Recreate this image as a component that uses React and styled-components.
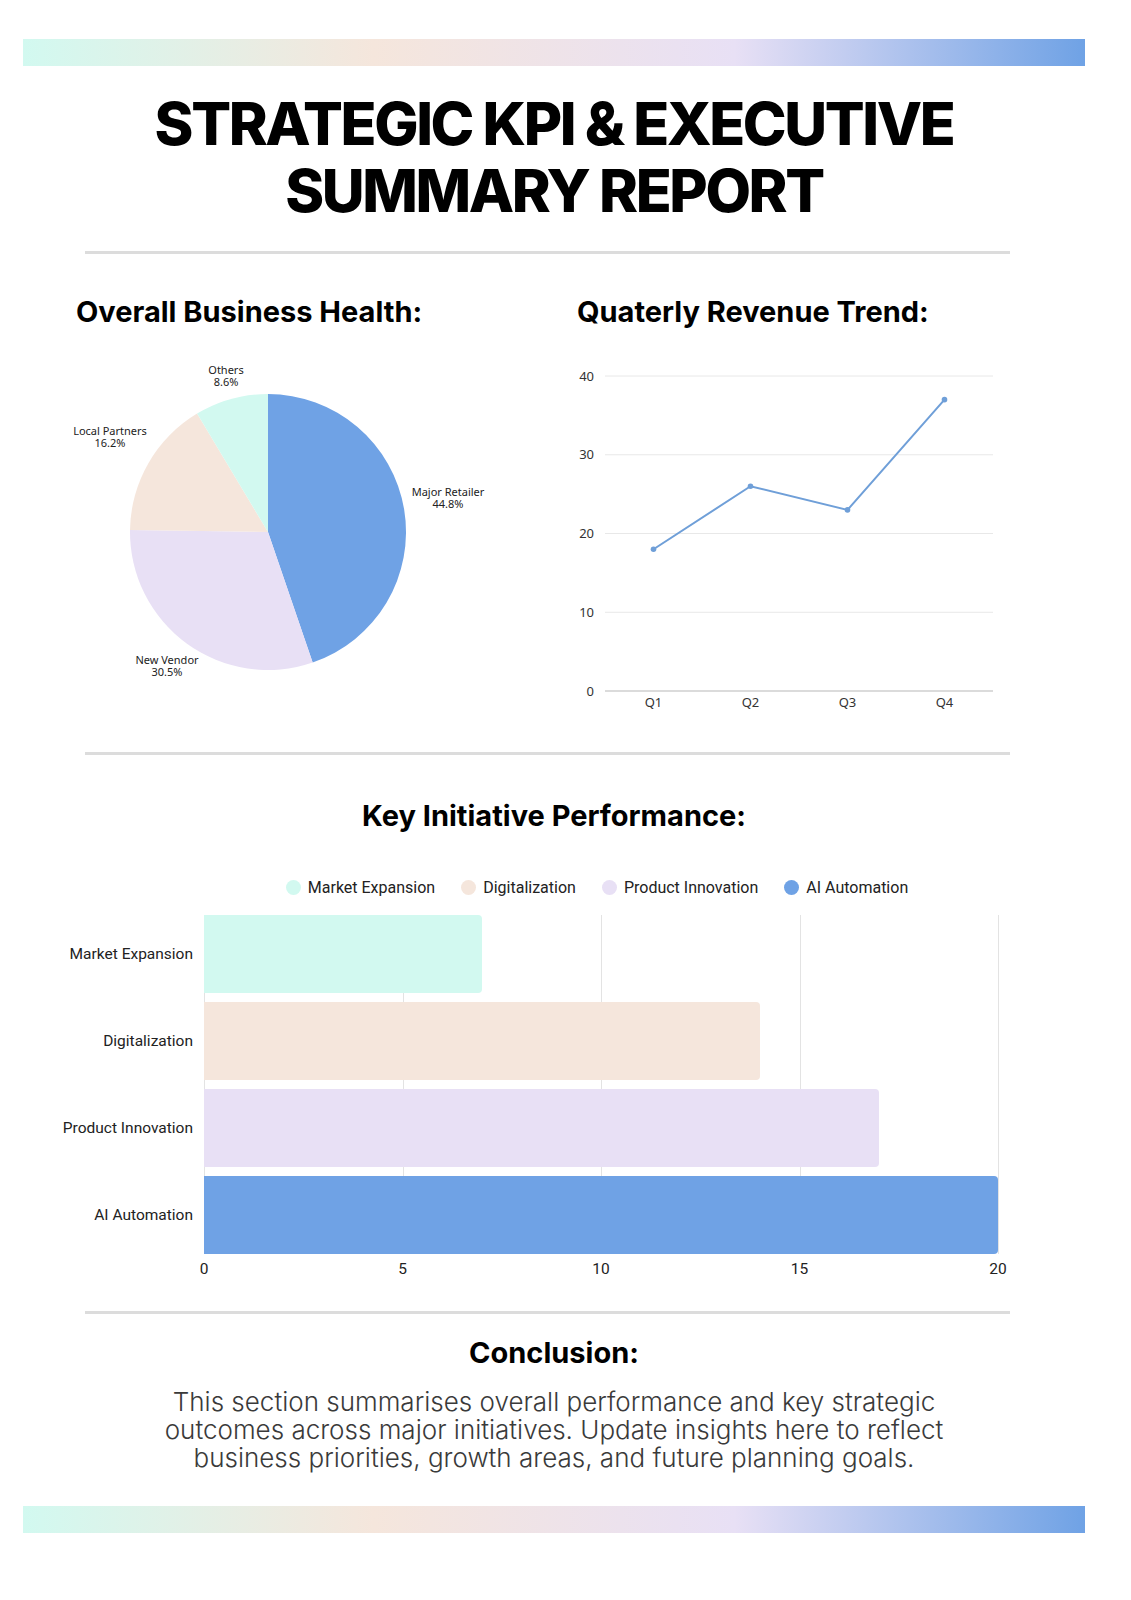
import React from 'react';
import styled, { createGlobalStyle } from 'styled-components';

const GlobalStyle = createGlobalStyle`
  body {
    margin: 0;
    background: #ffffff;
    font-family: Inter, "Noto Sans", sans-serif;
    color: #000000;
  }
`;

const Page = styled.div`
  width: 1108px;
  padding: 39px 23px 60px;
  box-sizing: border-box;
`;

const GradientBar = styled.div`
  height: 27px;
  background: linear-gradient(90deg, #d2f9f0 0%, #f5e6dc 33%, #e8e0f5 67%, #6fa2e5 100%);
`;

const Title = styled.h1`
  margin: 24px 0 0;
  font-family: Inter, sans-serif;
  font-weight: 800;
  font-size: 59px;
  line-height: 67px;
  text-align: center;
  letter-spacing: -2.4px;
`;

const Divider = styled.hr`
  border: none;
  height: 3px;
  background: #dcdcdc;
  width: 925px;
  margin: ${p => p.$top}px 0 0 62px;
`;

const ChartsRow = styled.div`
  display: grid;
  grid-template-columns: 501px 501px;
  padding-left: 53px;
  margin-top: 40px;
`;

const ChartColumn = styled.section`
  display: flex;
  flex-direction: column;
`;

const SectionHeading = styled.h2`
  margin: 0;
  font-family: Inter, sans-serif;
  font-weight: 700;
  font-size: 29px;
  line-height: 36px;
  letter-spacing: 0;
  text-align: ${p => p.$align || 'left'};
`;

const ChartSvg = styled.svg`
  display: block;
  margin-top: 31px;
  overflow: visible;
`;

const PieLabel = styled.text`
  font-family: "Noto Sans", sans-serif;
  font-size: 11px;
  fill: #222;
`;

const AxisLabel = styled.text`
  font-family: "Noto Sans", sans-serif;
  font-size: 13px;
  fill: #333;
`;

const InitiativeSection = styled.section`
  margin-top: 43px;
`;

const Legend = styled.div`
  display: flex;
  justify-content: center;
  gap: 26px;
  margin: 44px 0 0 86px;
`;

const LegendItem = styled.div`
  display: flex;
  align-items: center;
  gap: 7px;
  font-family: Roboto, "Noto Sans", sans-serif;
  font-size: 16px;
  color: #222;
`;

const LegendDot = styled.span`
  width: 15px;
  height: 15px;
  border-radius: 50%;
  background: ${p => p.$color};
`;

const BarChart = styled.div`
  display: grid;
  grid-template-columns: 181px 794px;
  margin-top: 18px;
`;

const CategoryColumn = styled.div`
  display: flex;
  flex-direction: column;
  gap: 9px;
`;

const CategoryLabel = styled.div`
  height: 78px;
  display: flex;
  align-items: center;
  justify-content: flex-end;
  padding-right: 11px;
  font-family: Roboto, "Noto Sans", sans-serif;
  font-size: 15.5px;
  color: #222;
`;

const Plot = styled.div`
  position: relative;
  display: flex;
  flex-direction: column;
  gap: 9px;
`;

const GridLine = styled.div`
  position: absolute;
  top: 0;
  bottom: 0;
  width: 1px;
  background: #e3e3e3;
`;

const Bar = styled.div`
  position: relative;
  height: 78px;
  background: ${p => p.$color};
  border-radius: 0 4px 4px 0;
`;

const Ticks = styled.div`
  grid-column: 2;
  display: flex;
  justify-content: space-between;
  margin-top: 6px;
  font-family: Roboto, "Noto Sans", sans-serif;
  font-size: 15.5px;
  color: #222;
`;

const Tick = styled.span`
  width: 0;
  display: flex;
  justify-content: center;
  white-space: nowrap;
`;

const Conclusion = styled.section`
  margin-top: 21px;
  text-align: center;
`;

const Paragraph = styled.p`
  margin: 17px auto 0;
  width: 860px;
  font-family: Inter, sans-serif;
  font-weight: 300;
  font-size: 26px;
  line-height: 28px;
  color: #3a3a3a;
`;

const BottomBar = styled(GradientBar)`
  margin-top: 34px;
`;

const pieData = [
  { label: 'Major Retailer', value: 44.8, color: '#6fa2e5', lx: 372, ly: 135 },
  { label: 'New Vendor', value: 30.5, color: '#e8e0f5', lx: 91, ly: 303 },
  { label: 'Local Partners', value: 16.2, color: '#f5e6dc', lx: 34, ly: 74 },
  { label: 'Others', value: 8.6, color: '#d2f9f0', lx: 150, ly: 13 },
];

const revenue = [
  { q: 'Q1', v: 18 },
  { q: 'Q2', v: 26 },
  { q: 'Q3', v: 23 },
  { q: 'Q4', v: 37 },
];

const initiatives = [
  { label: 'Market Expansion', value: 7, color: '#d2f9f0' },
  { label: 'Digitalization', value: 14, color: '#f5e6dc' },
  { label: 'Product Innovation', value: 17, color: '#e8e0f5' },
  { label: 'AI Automation', value: 20, color: '#6fa2e5' },
];

const PieChart = () => {
  const cx = 192;
  const cy = 171;
  const r = 138;
  const total = pieData.reduce((s, d) => s + d.value, 0);
  let start = 0;
  const point = a => [cx + r * Math.sin(a), cy - r * Math.cos(a)];

  return (
    <ChartSvg width="440" height="330" viewBox="0 0 440 330">
      {pieData.map(d => {
        const end = start + (d.value / total) * Math.PI * 2;
        const [x1, y1] = point(start);
        const [x2, y2] = point(end);
        const large = end - start > Math.PI ? 1 : 0;
        const path = `M${cx},${cy} L${x1},${y1} A${r},${r} 0 ${large} 1 ${x2},${y2} Z`;
        start = end;
        return <path key={d.label} d={path} fill={d.color} />;
      })}
      {pieData.map(d => (
        <PieLabel key={d.label} x={d.lx} y={d.ly} textAnchor="middle">
          <tspan x={d.lx} dy="0">{d.label}</tspan>
          <tspan x={d.lx} dy="12">{d.value}%</tspan>
        </PieLabel>
      ))}
    </ChartSvg>
  );
};

const LineChart = () => {
  const left = 28;
  const right = 416;
  const zero = 330;
  const unit = 7.875;
  const step = (right - left) / revenue.length;
  const pts = revenue.map((d, i) => [left + step * (i + 0.5), zero - d.v * unit]);

  return (
    <ChartSvg width="430" height="355" viewBox="0 0 430 355">
      {[0, 10, 20, 30, 40].map(t => (
        <g key={t}>
          <line
            x1={left}
            x2={right}
            y1={zero - t * unit}
            y2={zero - t * unit}
            stroke={t === 0 ? '#cfcfcf' : '#e8e8e8'}
            strokeWidth={t === 0 ? 1.5 : 1}
          />
          <AxisLabel x="17" y={zero - t * unit + 4.5} textAnchor="end">{t}</AxisLabel>
        </g>
      ))}
      <polyline
        points={pts.map(p => p.join(',')).join(' ')}
        fill="none"
        stroke="#6f9fd8"
        strokeWidth="2"
      />
      {pts.map((p, i) => (
        <g key={revenue[i].q}>
          <circle cx={p[0]} cy={p[1]} r="2.8" fill="#6f9fd8" />
          <AxisLabel x={p[0]} y="346" textAnchor="middle">{revenue[i].q}</AxisLabel>
        </g>
      ))}
    </ChartSvg>
  );
};

export default function App() {
  const max = 20;
  const ticks = [0, 5, 10, 15, 20];
  return (
    <Page>
      <GlobalStyle />
      <GradientBar />
      <Title>
        STRATEGIC KPI &amp; EXECUTIVE
        <br />
        SUMMARY REPORT
      </Title>
      <Divider $top={27} />

      <ChartsRow>
        <ChartColumn>
          <SectionHeading>Overall Business Health:</SectionHeading>
          <PieChart />
        </ChartColumn>
        <ChartColumn>
          <SectionHeading>Quaterly Revenue Trend:</SectionHeading>
          <LineChart />
        </ChartColumn>
      </ChartsRow>

      <Divider $top={36} />

      <InitiativeSection>
        <SectionHeading $align="center">Key Initiative Performance:</SectionHeading>
        <Legend>
          {initiatives.map(d => (
            <LegendItem key={d.label}>
              <LegendDot $color={d.color} />
              {d.label}
            </LegendItem>
          ))}
        </Legend>
        <BarChart>
          <CategoryColumn>
            {initiatives.map(d => (
              <CategoryLabel key={d.label}>{d.label}</CategoryLabel>
            ))}
          </CategoryColumn>
          <Plot>
            {ticks.map(t => (
              <GridLine key={t} style={{ left: `${(t / max) * 100}%` }} />
            ))}
            {initiatives.map(d => (
              <Bar key={d.label} $color={d.color} style={{ width: `${(d.value / max) * 100}%` }} />
            ))}
          </Plot>
          <Ticks>
            {ticks.map(t => (
              <Tick key={t}>{t}</Tick>
            ))}
          </Ticks>
        </BarChart>
      </InitiativeSection>

      <Divider $top={33} />

      <Conclusion>
        <SectionHeading $align="center">Conclusion:</SectionHeading>
        <Paragraph>
          This section summarises overall performance and key strategic outcomes across major
          initiatives. Update insights here to reflect business priorities, growth areas, and
          future planning goals.
        </Paragraph>
      </Conclusion>

      <BottomBar />
    </Page>
  );
}
